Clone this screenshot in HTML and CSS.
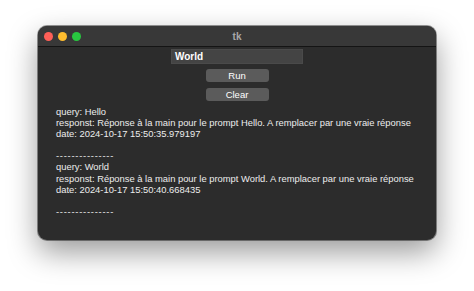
FILE: index.html
```html
<!DOCTYPE html>
<html lang="en">
<head>
    <meta charset="UTF-8">
    <title>tk</title>
    <link rel="stylesheet" href="styles.css">
</head>
<body>
    <div class="window">
        <div class="titlebar">
            <div class="lights">
                <span class="light red"></span>
                <span class="light yellow"></span>
                <span class="light green"></span>
            </div>
            <div class="title">tk</div>
        </div>
        <div class="content">
            <div class="entry">World</div>
            <button class="btn">Run</button>
            <button class="btn">Clear</button>
            <div class="output">
                <p>query: Hello</p>
                <p>responst: Réponse à la main pour le prompt Hello. A remplacer par une vraie réponse</p>
                <p>date: 2024-10-17 15:50:35.979197</p>
                <p>&nbsp;</p>
                <p class="sep">---------------</p>
                <p>query: World</p>
                <p>responst: Réponse à la main pour le prompt World. A remplacer par une vraie réponse</p>
                <p>date: 2024-10-17 15:50:40.668435</p>
                <p>&nbsp;</p>
                <p class="sep">---------------</p>
            </div>
        </div>
    </div>
</body>
</html>
```

FILE: styles.css
```css
* {
    box-sizing: border-box;
    margin: 0;
    padding: 0;
}

html,
body {
    height: 100%;
}

body {
    font-family: 'Liberation Sans', Arial, sans-serif;
    background-color: #ffffff;
    padding: 26px 0 0 38px;
}

.window {
    width: 398px;
    height: 214px;
    background-color: #2c2c2c;
    border-radius: 9px;
    overflow: hidden;
    box-shadow: 0 12px 30px rgba(0, 0, 0, 0.4), 0 0 0 1px rgba(0, 0, 0, 0.4);
    display: flex;
    flex-direction: column;
}

.titlebar {
    height: 21px;
    background-color: #383838;
    border-bottom: 1px solid #141414;
    display: flex;
    align-items: center;
    position: relative;
}

.lights {
    display: flex;
    gap: 5px;
    padding-left: 6px;
}

.light {
    width: 9px;
    height: 9px;
    border-radius: 50%;
}

.red { background-color: #fe5f57; }
.yellow { background-color: #febc2e; }
.green { background-color: #28c840; }

.title {
    position: absolute;
    left: 0;
    right: 0;
    text-align: center;
    color: #a8a8a8;
    font-size: 10px;
    font-weight: bold;
}

.content {
    display: flex;
    flex-direction: column;
    align-items: center;
    padding-top: 2px;
}

.entry {
    width: 132px;
    height: 15px;
    background-color: #444444;
    border: 1px solid #4a4a4a;
    color: #ffffff;
    font-size: 10px;
    font-weight: bold;
    padding: 1px 0 0 3px;
}

.btn {
    width: 63px;
    height: 13px;
    margin-top: 5px;
    background-color: #5b5b5b;
    border: none;
    border-radius: 3px;
    color: #ffffff;
    font-family: inherit;
    font-size: 9.5px;
    line-height: 13px;
}

.btn + .btn {
    margin-top: 6px;
}

.output {
    align-self: stretch;
    padding: 5px 0 0 18px;
    color: #ececec;
    font-size: 9.4px;
    line-height: 11.1px;
}

.output p {
    white-space: nowrap;
}

.output .sep {
    letter-spacing: 0.75px;
}
```
